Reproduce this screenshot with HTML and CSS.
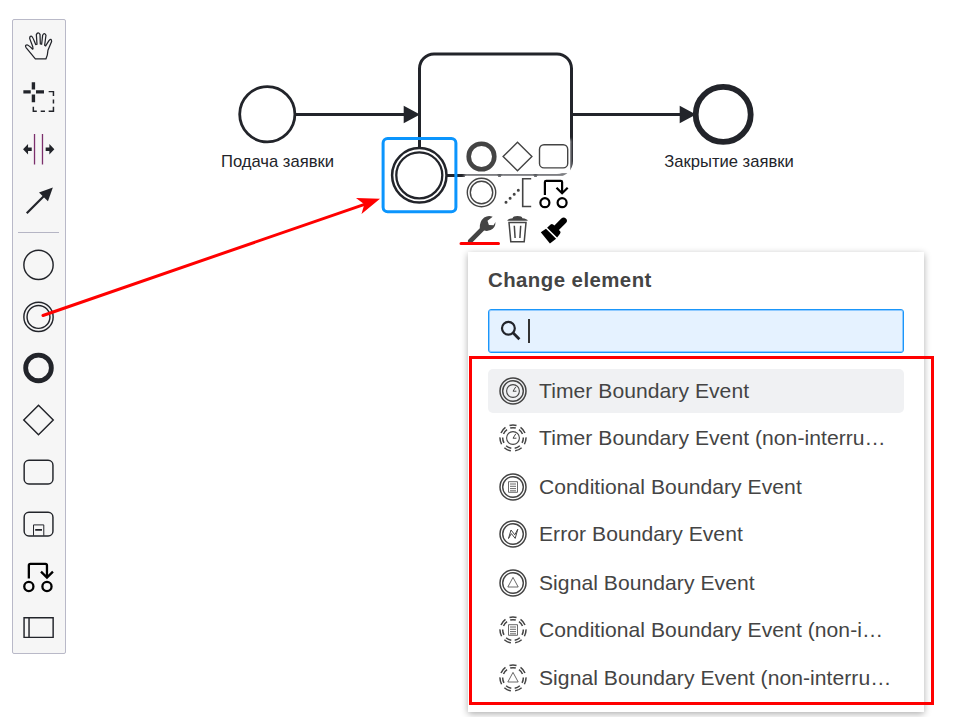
FILE: index.html
```html
<!DOCTYPE html>
<html lang="ru">
<head>
<meta charset="utf-8">
<title>BPMN</title>
<link rel="stylesheet" href="styles.css">
</head>
<body>
<svg class="defs" aria-hidden="true">
  <symbol id="ring2" viewBox="-14 -14 28 28"><circle r="13" stroke-width="1.5"/><circle r="10.3" stroke-width="1.4"/></symbol>
  <symbol id="ring2-dash" viewBox="-14 -14 28 28"><g transform="rotate(-90)"><circle r="13" stroke-width="1.5" pathLength="7" stroke-dasharray=".62 .38" stroke-dashoffset=".31"/><circle r="10.3" stroke-width="1.5" pathLength="7" stroke-dasharray=".62 .38" stroke-dashoffset=".31"/></g></symbol>
  <symbol id="timer" viewBox="-14 -14 28 28"><circle r="6.4" stroke-width="1.1"/><path d="M2.8-4.2 0 .2h3.4" stroke-width="1"/></symbol>
  <symbol id="cond" viewBox="-14 -14 28 28"><path d="M-4.5-5.3h9V5.3h-9zM-3-3H3M-3-.7H3M-3 1.6H3M-3 3.8H3" stroke-width=".8"/></symbol>
  <symbol id="error" viewBox="-14 -14 28 28"><path d="M-4.5 4.5-2-4 1.8.8 4.8-4.8 2.2 4.4-1.6-.4z" stroke-width="1"/></symbol>
  <symbol id="signal" viewBox="-14 -14 28 28"><path d="M0-5.6 5.2 4h-10.4z" stroke-width=".8"/></symbol>
</svg>
<main class="canvas">
  <svg class="diagram" width="972" height="717" viewBox="0 0 972 717">
    <g fill="none" stroke="#22242a" stroke-width="3">
      <rect x="419.5" y="54" width="152" height="121.5" rx="14.5"/>
      <circle cx="267.3" cy="114.3" r="27.6" fill="#fff" stroke-width="2.8"/>
      <path d="M296 114.5h112M571.5 114.5h112"/>
      <circle cx="723.2" cy="114.4" r="27.5" fill="#fff" stroke-width="5.8"/>
      <circle cx="419.3" cy="175.3" r="27.2" fill="#fff" stroke-width="2.5"/>
      <circle cx="419.3" cy="175.3" r="23" stroke-width="2.3"/>
    </g>
    <path d="M403.7 105.8v17.4l16.3-8.7zM679.7 105.8v17.4l16.3-8.7z" fill="#22242a"/>
    <rect x="383.1" y="138.6" width="72.8" height="73.2" rx="4.5" fill="none" stroke="#0b95fd" stroke-width="3"/>
  </svg>
  <div class="label start">Подача заявки</div>
  <div class="label end">Закрытие заявки</div>

  <nav class="palette">
    <svg viewBox="-26 -26 52 52"><g transform="scale(.333) translate(-117 -107)" stroke-width="3.8" stroke-linejoin="round"><path d="M106 146 78 112Q74 105 80 104 84 103 98 117 100 116 98 109L89 85Q89 76 95 78 98 79 107 103L111 102 109 73Q114 63 120 72L121 101 125 102 128 75Q133 65 138 75L134 105 137 107 147 91Q155 82 155 94L144 120Q143 137 138 146z"/></g></svg>
    <svg viewBox="-26 -26 52 52"><path d="M-5.6-15.8v7.3M-5.6-3.5v7.9M-15.7-6h7.4M-3-6h8" stroke-width="3.4"/><path d="M9.7-6.3h4.8v4.5M14.5 1.5v4.2M14.5 9v4.5H9.7M6 13.5H1.7M-2.2 13.5H-5.7V9" stroke-width="1.5"/></svg>
    <svg viewBox="-26 -26 52 52"><g transform="translate(0 -.9)"><path d="M-4.5-15v30.5M3.5-15v30.5" class="space"/><path class="solid" d="M-16 .2l5-5.2v3.5h3.7v3.4H-11v3.5zM15.4.2l-5-5.2v3.5H6.7v3.4h3.7v3.5z"/></g></svg>
    <svg viewBox="-26 -26 52 52"><path d="M-12.3 12.5 5-5" stroke-width="2.2"/><path class="solid" d="M13.9-13.5 0-8.4l9 8.8z"/></svg>
    <hr>
    <svg viewBox="-26 -26 52 52"><circle cx="-.5" r="14.7"/></svg>
    <svg viewBox="-26 -26 52 52"><circle cx="-.5" r="14.7"/><circle cx="-.5" r="11.5"/></svg>
    <svg viewBox="-26 -26 52 52"><circle cx="-.5" r="12.9" stroke-width="4.8"/></svg>
    <svg viewBox="-26 -26 52 52"><path d="M-.5-14.8 14.3 0-.5 14.8-15.3 0z"/></svg>
    <svg viewBox="-26 -26 52 52"><rect x="-14.9" y="-11.6" width="28.9" height="23.7" rx="4.8"/></svg>
    <svg viewBox="-26 -26 52 52"><rect x="-14.9" y="-11.6" width="28.9" height="23.7" rx="4.8"/><path d="M-5.5 11.8V1h10.3v10.8" stroke-width="1"/><path d="M-3.8 6h6.8" stroke-width="1.8"/></svg>
    <svg viewBox="-26 -26 52 52"><g class="black" stroke-width="2.3" transform="translate(0 .5)"><circle cx="-10.2" cy="10.2" r="4.6"/><circle cx="8" cy="10.2" r="4.6"/><path d="M-10.2 2V-11q0-1.5 1.5-1.5H6.5Q8-12.5 8-11V1M2-4.8l6 6 6-6"/></g></svg>
    <svg viewBox="-26 -26 52 52"><path d="M-15-9.2h29.2v19.7H-15zM-10-9.2v19.7"/></svg>
  </nav>

  <div class="pad">
    <svg viewBox="-16.5 -16.5 33 33"><circle r="12.8" stroke-width="4.6"/></svg>
    <svg viewBox="-16.5 -16.5 33 33"><path d="M0-14.2 14.4 0 0 14.2-14.4 0z"/></svg>
    <svg viewBox="-16.5 -16.5 33 33"><rect x="-14" y="-11.8" width="28.2" height="23.2" rx="4.5"/></svg>
    <svg viewBox="-16.5 -16.5 33 33"><circle r="14.2"/><circle r="11.2"/></svg>
    <svg viewBox="-16.5 -16.5 33 33"><path d="M13.7-13.8H5.2v27.8h8.5" stroke-width="1.6"/><path d="M-11.5 9.8h.01M-7.4 5.8h.01M-3.3 1.8h.01M.8-2.2h.01" stroke-width="3" stroke-linecap="round"/></svg>
    <svg viewBox="-16.5 -16.5 33 33"><g class="black" stroke-width="2.2"><circle cx="-8.6" cy="10.2" r="4.5"/><circle cx="8.6" cy="10.2" r="4.5"/><path d="M-8.6 2.6v-13q0-1.3 1.3-1.3H7.3q1.3 0 1.3 1.3V1M3-4.8l5.6 5.6 5.6-5.6"/></g></svg>
    <svg viewBox="-16.5 -16.5 33 33"><path class="solid" d="M-13.4 10.5-1.7-1.2Q-2.2-8 2.7-12 7-14.8 11.2-12.7L6-8.8 7.4-4.5 12-4.2l2-3.2Q14-1.4 9.1.6 5.6 2 2.6.9L-9.8 13.5q-2 1-3.4-.4-1-1.3-.2-2.6z"/></svg>
    <svg viewBox="-16.5 -16.5 33 33"><path class="solid" d="M-10.3-8.8q.7-2 5.4-2.5.3-2.3 4.9-2.3t4.9 2.3q4.7.5 5.4 2.5z"/><path d="M-8.5-7h17L6.7 12.2H-6.7zM-3.2-3.8-2.4 8.5M3.2-3.8 2.4 8.5" stroke-width="1.5"/></svg>
    <svg viewBox="-16.5 -16.5 33 33"><g fill="#000" stroke="none"><path d="M-12.7 2.8-7.5-.8 2.6 9.2-3.6 14z"/><path d="M-6.4-1.8-2.9-5Q-1.7-6-.4-5L.9-4 7.8-11q2.4-2.2 4.6 0 2.2 2.2 0 4.6L5.4.4l1.3 1.4q.8 1.2-.2 2.4L3.6 8z"/></g></svg>
  </div>

  <section class="popup">
    <h2>Change element</h2>
    <div class="search">
      <svg width="22" height="22" viewBox="0 0 22 22"><circle cx="8.4" cy="8.2" r="6.4"/><path d="m13 12.8 6.4 6.4" stroke-width="2.8"/></svg>
      <span class="caret"></span>
    </div>
    <ul>
      <li class="active"><svg><use href="#ring2"/><use href="#timer"/></svg><span>Timer Boundary Event</span></li>
      <li><svg><use href="#ring2-dash"/><use href="#timer"/></svg><span>Timer Boundary Event (non-interru…</span></li>
      <li class="low"><svg><use href="#ring2"/><use href="#cond"/></svg><span>Conditional Boundary Event</span></li>
      <li><svg><use href="#ring2"/><use href="#error"/></svg><span>Error Boundary Event</span></li>
      <li class="low"><svg><use href="#ring2"/><use href="#signal"/></svg><span>Signal Boundary Event</span></li>
      <li><svg><use href="#ring2-dash"/><use href="#cond"/></svg><span>Conditional Boundary Event (non-i…</span></li>
      <li><svg><use href="#ring2-dash"/><use href="#signal"/></svg><span>Signal Boundary Event (non-interru…</span></li>
    </ul>
  </section>

  <svg class="marks" width="972" height="717" viewBox="0 0 972 717">
    <g fill="none" stroke="#f00" stroke-width="3" stroke-linecap="round">
      <path d="M43 315.5 366 203.8M461 243.5h37.5"/>
      <rect x="470.5" y="357.5" width="462" height="346"/>
    </g>
    <path d="M380 198.7 356 198l8.3 6.2-2.8 9.8z" fill="#f00"/>
  </svg>
</main>
</body>
</html>
```
FILE: styles.css
```css
* { box-sizing: border-box; }
body {
  margin: 0;
  background: #fff;
  font-family: "Liberation Sans", Arial, sans-serif;
}
.defs { position: absolute; width: 0; height: 0; }
.canvas {
  position: relative;
  width: 972px;
  height: 717px;
  overflow: hidden;
}
.diagram, .marks { position: absolute; left: 0; top: 0; }
.marks { pointer-events: none; }

.label {
  position: absolute;
  top: 153px;
  width: 160px;
  text-align: center;
  font-size: 16.6px;
  line-height: 18px;
  white-space: nowrap;
  color: #22242a;
}
.label.start { left: 197.5px; }
.label.end { left: 649px; }

.palette {
  position: absolute;
  left: 12px;
  top: 19px;
  width: 54px;
  height: 635px;
  display: flex;
  flex-direction: column;
  background: #f6f6f6;
  border: 1px solid #b9b9c8;
  border-radius: 2px;
}
.palette svg {
  width: 52px;
  height: 51.8px;
  flex: none;
  fill: none;
  stroke: #22242a;
  stroke-width: 1.45;
}
.palette hr {
  width: 41px;
  height: 1px;
  margin: 5px 0 5.6px 5px;
  border: 0;
  flex: none;
  background: #b5b5c4;
}
.palette .solid { fill: #22242a; stroke: none; }
.palette .space { stroke: #7c2f6c; stroke-width: 1.3; }
.palette .black, .pad .black { stroke: #000; }

.pad {
  position: absolute;
  left: 464.7px;
  top: 139.8px;
  display: grid;
  grid-template-columns: repeat(3, 33px);
  gap: 3.4px;
}
.pad svg {
  width: 33px;
  height: 33px;
  display: block;
  overflow: visible;
  background: #fff;
  box-shadow: 0 0 3px 1.4px #fff;
  fill: none;
  stroke: #444;
  stroke-width: 1.4;
}
.pad .solid { fill: #444; stroke: none; }

.popup {
  position: absolute;
  left: 468px;
  top: 252px;
  width: 456px;
  height: 460px;
  padding: 15px 20px;
  background: #fff;
  box-shadow: 0 2px 7px rgba(0, 0, 0, .32);
  color: #444;
}
.popup h2 {
  margin: 0 0 16px;
  font-size: 20.4px;
  letter-spacing: .45px;
  line-height: 26px;
}
.search {
  display: flex;
  align-items: center;
  height: 44px;
  padding: 0 0 1px 11px;
  background: #e5f2ff;
  border: 1px solid #1a96fa;
  border-radius: 3px;
  box-shadow: inset 0 0 0 1px #8fcaff;
}
.search svg { fill: none; stroke: #22242a; stroke-width: 2.2; }
.caret {
  width: 1.5px;
  height: 24px;
  margin-left: 6px;
  background: #333;
}
.popup ul {
  list-style: none;
  margin: 15.6px 0 0;
  padding: 0;
  display: flex;
  flex-direction: column;
  gap: 3.9px;
}
.popup li {
  display: flex;
  align-items: center;
  gap: 12px;
  height: 44px;
  padding-left: 11px;
  border-radius: 5px;
  font-size: 21.1px;
  letter-spacing: .05px;
  white-space: nowrap;
}
.popup li.low { padding-top: 2px; }
.popup li.active { background: #f0f1f3; }
.popup li svg {
  width: 28px;
  height: 28px;
  flex: none;
  fill: none;
  stroke: #444;
}
```
